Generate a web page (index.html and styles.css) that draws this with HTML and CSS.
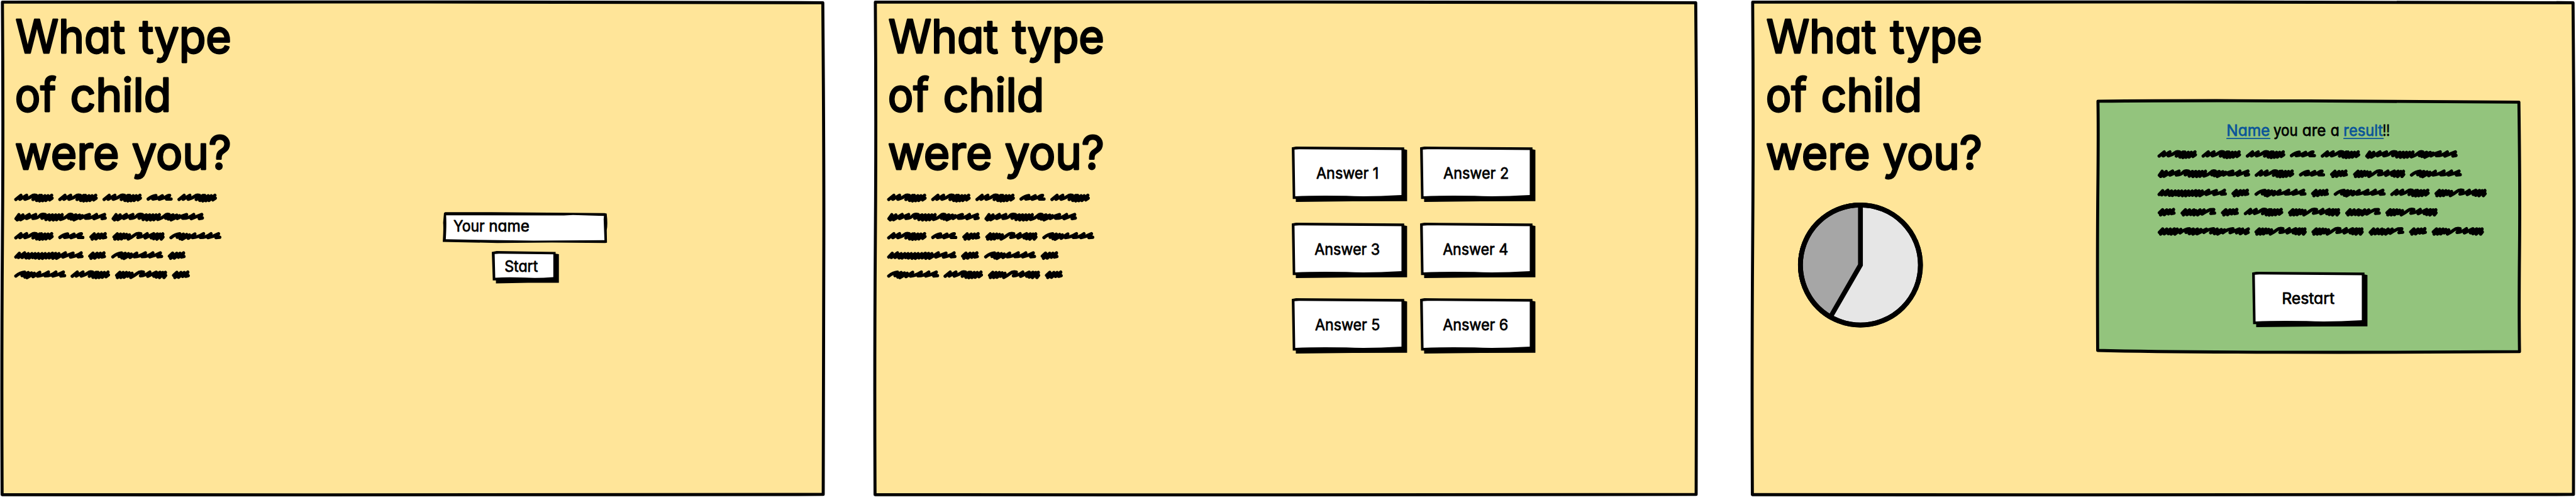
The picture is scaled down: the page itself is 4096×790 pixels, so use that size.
FILE: index.html
```html
<!DOCTYPE html>
<html lang="en">
<head>
<meta charset="utf-8">
<title>What type of child were you?</title>
<link rel="stylesheet" href="styles.css">
</head>
<body>
<svg class="defs" aria-hidden="true">
  <defs>
    <g id="frame"><path d="M4 3.5Q300 2.5 700 3.2T1357.500 4.500Q1359.500 250 1359.200 400T1358.200 815.500Q900 817.300 500 816.300T3.500 815.800Q2.500 600 4 400T4 3.500Z"/></g>
    <g id="button-box"><path d="M0 1.300 7 0 185.500 1.300V4.500L190.300 5.500V90L100 90.300 6.700 91.400V86.300H1.600Z"/><path class="paper" d="M4.500 5 12 4.300 181 5.700V80Q125 83 90 81.300 40 80.300 5.700 82Z"/></g>
    <path id="wA" d="M7 28 32 8 27 27 60 8 52 27Q75 20 85 12T107 8L92 28 125 9 110 33 134 9 124 35 151 10 139 34 166 10 155 33 184 8 176 20 186 22 174 30"/>
    <path id="wB" d="M7 26Q25 12 45 9L30 26Q60 22 77 10L62 27 90 18Q104 7 113 8L98 26 120 26"/>
    <path id="wC" d="M8 28 22 9 14 34 42 10 30 33 73 8 60 27 105 8 92 27Q115 24 125 14T152 8L136 26 172 10 156 32 188 10 174 34 204 10 192 34 220 10 208 33 236 9 228 32Q252 24 262 14T284 8L268 26 304 10 280 30 322 11 294 34 336 14 325 27Q344 15 371 8L352 26Q380 27 406 8L394 28Q428 15 446 8L434 28 449 25"/>
    <path id="wD" d="M8 24 24 9 14 34 44 10 32 33 60 10 52 29 78 8 68 28 80 25"/>
    <path id="wE" d="M8 24 24 9 12 34 40 10 28 34 56 10 44 33 70 12 62 28 84 14 78 34Q98 24 110 14T140 8L126 26Q150 24 172 8L162 28 204 8 192 28 222 9 204 32 236 10 220 34 249 9 242 34 250 24"/>
    <path id="wF" d="M7 27Q28 10 50 8L38 25 68 10 52 32 84 12 62 35 98 14 92 30 125 9 114 27Q140 25 168 8L152 26Q182 26 205 8L190 27Q220 20 242 8L230 27 248 25"/>
    <path id="wG" d="M7 28 24 10 20 30 50 8 38 30 68 12 58 32 86 12 72 33 102 12 90 30 118 12 104 33 136 12 122 34 152 12 138 34 170 12 156 32 188 10 172 32 204 11 190 34 220 12 208 34 252 8 240 28 290 9 278 28Q310 22 330 8L316 27 334 25"/>
    <path id="wH" d="M8 26 24 9 14 34 44 10 32 33 66 10 50 32 76 14 66 34 96 10 84 34 116 10 106 30Q128 16 145 9L164 8 150 27 168 25"/>
    <path id="wI" d="M8 26 24 9 14 34 44 10 32 33 62 10 52 32 82 9 66 34 96 10 84 34 114 12 110 28Q135 9 157 8L140 26 176 10 156 32 196 10 174 34 214 12 194 33 240 10 228 26Q250 10 276 8L262 28 294 10 280 32 314 12 296 34 330 14 322 28Q344 10 372 8L358 27 404 9 390 28 420 10 408 32 448 9 434 32 447 26"/>
    <g id="intro-copy">
      <use href="#wA"/><use href="#wA" x="218"/><use href="#wA" x="437"/><use href="#wB" x="655"/><use href="#wA" x="808"/>
      <use href="#wC" y="95"/><use href="#wC" x="481" y="95"/>
      <use href="#wA" y="190"/><use href="#wB" x="218" y="190"/><use href="#wD" x="371" y="190"/><use href="#wE" x="485" y="190"/><use href="#wF" x="768" y="190"/>
      <use href="#wG" y="285"/><use href="#wD" x="365" y="285"/><use href="#wF" x="480" y="285"/><use href="#wD" x="759" y="285"/>
      <use href="#wF" y="380"/><use href="#wA" x="279" y="380"/><use href="#wE" x="498" y="380"/><use href="#wD" x="780" y="380"/>
    </g>
  </defs>
</svg>

<section class="screen">
  <svg class="outline" viewBox="0 0 1362 820" preserveAspectRatio="none"><use href="#frame"/></svg>
  <div class="side">
    <h1><svg class="title" viewBox="20 20 370 284">
      <text x="26" y="87.500" textLength="181" lengthAdjust="spacingAndGlyphs">What</text><text x="230" y="87.500" textLength="152" lengthAdjust="spacingAndGlyphs">type</text>
      <text x="25" y="183.500" textLength="68" lengthAdjust="spacingAndGlyphs">of</text><text x="116" y="183.500" textLength="167" lengthAdjust="spacingAndGlyphs">child</text>
      <text x="25" y="279.500" textLength="172" lengthAdjust="spacingAndGlyphs">were</text><text x="218" y="279.500" textLength="164" lengthAdjust="spacingAndGlyphs">you?</text>
    </svg></h1>
    <svg class="intro scribble" viewBox="0 0 1026 426"><use href="#intro-copy"/></svg>
  </div>
  <form class="start-form">
    <svg class="name-field label" viewBox="0 0 272 51.500">
      <path d="M2 1.500 4 .3 80 .2 267 1.800 270.500 2.500Q272.500 20 270.600 30L271 50.500 268 51 180 50.400 90 51 0 49.300Q1.500 25 .6 18Z"/>
      <path class="paper" d="M5.500 5.500 200 5.600 215 4.800 266 6.500 265.500 12 266.800 46.500 150 47.300 60 45.800 5 45Q6.500 20 5.500 5.500Z"/>
      <text x="17.700" y="32" textLength="51.500" lengthAdjust="spacingAndGlyphs">Your</text><text x="76" y="32" textLength="67" lengthAdjust="spacingAndGlyphs">name</text>
    </svg>
    <svg class="start label" viewBox="0 0 111 54">
      <path d="M0 1.500 8 0 105.300 1.500V4.500L110.700 5.200V52.300L60 52.500 6.800 53.500V48.500H1.600Z"/>
      <path class="paper" d="M4.700 5 12 4.300 101.500 5.500V43Q75 45 55 43.800 25 42.800 5.700 44Z"/>
      <text x="21" y="34" textLength="55" lengthAdjust="spacingAndGlyphs">Start</text>
    </svg>
  </form>
</section>

<section class="screen">
  <svg class="outline" viewBox="0 0 1362 820" preserveAspectRatio="none"><use href="#frame"/></svg>
  <div class="side">
    <h1><svg class="title" viewBox="20 20 370 284">
      <text x="26" y="87.500" textLength="181" lengthAdjust="spacingAndGlyphs">What</text><text x="230" y="87.500" textLength="152" lengthAdjust="spacingAndGlyphs">type</text>
      <text x="25" y="183.500" textLength="68" lengthAdjust="spacingAndGlyphs">of</text><text x="116" y="183.500" textLength="167" lengthAdjust="spacingAndGlyphs">child</text>
      <text x="25" y="279.500" textLength="172" lengthAdjust="spacingAndGlyphs">were</text><text x="218" y="279.500" textLength="164" lengthAdjust="spacingAndGlyphs">you?</text>
    </svg></h1>
    <svg class="intro scribble" viewBox="0 0 1026 426"><use href="#intro-copy"/></svg>
  </div>
  <div class="answers">
    <svg class="button label" viewBox="0 0 190.500 91.500"><use href="#button-box"/><text x="40.500" y="53" textLength="103" lengthAdjust="spacingAndGlyphs">Answer 1</text></svg>
    <svg class="button label" viewBox="0 0 190.500 91.500"><use href="#button-box"/><text x="38.500" y="53" textLength="108" lengthAdjust="spacingAndGlyphs">Answer 2</text></svg>
    <svg class="button label" viewBox="0 0 190.500 91.500"><use href="#button-box"/><text x="37.500" y="53" textLength="108" lengthAdjust="spacingAndGlyphs">Answer 3</text></svg>
    <svg class="button label" viewBox="0 0 190.500 91.500"><use href="#button-box"/><text x="37.500" y="53" textLength="108" lengthAdjust="spacingAndGlyphs">Answer 4</text></svg>
    <svg class="button label" viewBox="0 0 190.500 91.500"><use href="#button-box"/><text x="38.500" y="53" textLength="107" lengthAdjust="spacingAndGlyphs">Answer 5</text></svg>
    <svg class="button label" viewBox="0 0 190.500 91.500"><use href="#button-box"/><text x="37.500" y="53" textLength="108" lengthAdjust="spacingAndGlyphs">Answer 6</text></svg>
  </div>
</section>

<section class="screen last">
  <svg class="outline" viewBox="0 0 1362 820" preserveAspectRatio="none"><use href="#frame"/></svg>
  <div class="side">
    <h1><svg class="title" viewBox="20 20 370 284">
      <text x="26" y="87.500" textLength="181" lengthAdjust="spacingAndGlyphs">What</text><text x="230" y="87.500" textLength="152" lengthAdjust="spacingAndGlyphs">type</text>
      <text x="25" y="183.500" textLength="68" lengthAdjust="spacingAndGlyphs">of</text><text x="116" y="183.500" textLength="167" lengthAdjust="spacingAndGlyphs">child</text>
      <text x="25" y="279.500" textLength="172" lengthAdjust="spacingAndGlyphs">were</text><text x="218" y="279.500" textLength="164" lengthAdjust="spacingAndGlyphs">you?</text>
    </svg></h1>
    <svg class="pie" viewBox="-104 -104 208 208">
      <circle class="slice-light" r="99"/>
      <path class="slice-dark" d="M0 0V-99A99 99 0 0 0 -49.500 85.700Z"/>
      <circle class="ring" r="99"/>
    </svg>
  </div>
  <div class="result">
    <svg class="panel" viewBox="0 0 701 420" preserveAspectRatio="none"><path d="M3 3Q150 1.500 350 2.500T697.500 4.500Q699.500 150 698.500 250T698.500 416Q500 417.500 300 417T2.500 414Q1.800 250 2.800 150T3 3Z"/></svg>
    <svg class="sentence label" viewBox="3670 200 275 34">
      <g class="link"><text x="3673.500" y="223.800" textLength="71.500" lengthAdjust="spacingAndGlyphs">Name</text><text x="3866.500" y="223.800" textLength="65" lengthAdjust="spacingAndGlyphs">result</text><path d="M3674 228.200H3745M3867 228.200H3932"/></g>
      <text x="3751" y="223.800" textLength="40" lengthAdjust="spacingAndGlyphs">you</text><text x="3798.500" y="223.800" textLength="39" lengthAdjust="spacingAndGlyphs">are</text><text x="3845" y="223.800" textLength="14.500" lengthAdjust="spacingAndGlyphs">a</text><text x="3931" y="223.800" textLength="12" lengthAdjust="spacingAndGlyphs">!!</text>
    </svg>
    <svg class="details scribble" viewBox="0 0 1632 426">
      <use href="#wA"/><use href="#wA" x="218"/><use href="#wA" x="437"/><use href="#wB" x="655"/><use href="#wA" x="808"/><use href="#wC" x="1027"/>
      <use href="#wC" y="95"/><use href="#wA" x="481" y="95"/><use href="#wB" x="700" y="95"/><use href="#wD" x="853" y="95"/><use href="#wE" x="967" y="95"/><use href="#wF" x="1249" y="95"/>
      <use href="#wG" y="190"/><use href="#wD" x="365" y="190"/><use href="#wF" x="480" y="190"/><use href="#wD" x="759" y="190"/><use href="#wF" x="872" y="190"/><use href="#wA" x="1152" y="190"/><use href="#wE" x="1370" y="190"/>
      <use href="#wD" y="285"/><use href="#wH" x="113" y="285"/><use href="#wD" x="313" y="285"/><use href="#wA" x="427" y="285"/><use href="#wE" x="645" y="285"/><use href="#wH" x="928" y="285"/><use href="#wE" x="1127" y="285"/>
      <use href="#wI" y="380"/><use href="#wE" x="479" y="380"/><use href="#wE" x="761" y="380"/><use href="#wH" x="1044" y="380"/><use href="#wD" x="1244" y="380"/><use href="#wE" x="1356" y="380"/>
    </svg>
    <svg class="button restart label" viewBox="0 0 190.500 91.500"><use href="#button-box"/><text x="49" y="53" textLength="87" lengthAdjust="spacingAndGlyphs">Restart</text></svg>
  </div>
</section>
</body>
</html>
```
FILE: styles.css
```css
/* 1rem is ten design pixels on a 4250-wide board */
html { font-size: calc(100vw / 425); }

body {
  margin: 0;
  display: flex;
  background: #fff;
  overflow: hidden;
  font-family: Inter, "Liberation Sans", sans-serif;
  font-weight: 400;
  font-feature-settings: "cv11"; /* single-storey a */
}

svg { display: block; overflow: visible; }
h1 { margin: 0; font-weight: 400; }
.defs { position: absolute; width: 0; height: 0; }

.screen {
  position: relative;
  flex: none;
  display: flex;
  align-items: flex-start;
  width: 136.2rem;
  height: 82rem;
  margin-right: 7.8rem;
}
.screen + .screen { margin-right: 8.6rem; }
.screen.last { margin-right: 0; }

/* hand-drawn outline lying behind a screen's content */
.outline, .panel {
  position: absolute;
  inset: 0;
  width: 100%;
  height: 100%;
  z-index: -1;
  stroke: #000;
  stroke-width: 5;
  stroke-linejoin: round;
}
.outline { fill: #ffe599; z-index: -2; }
.panel { fill: #93c47d; }

.side { width: 37rem; padding: 2rem 0 0 2rem; }

.title {
  width: 37rem;
  height: 28.4rem;
  font-size: 76px;
  stroke: #000;
  stroke-width: 3px;
  stroke-linejoin: round;
}

.scribble {
  fill: none;
  stroke: #000;
  stroke-width: 16.5;
  stroke-linecap: round;
  stroke-linejoin: round;
}
.intro { width: 34.2rem; height: 14.2rem; margin: 1.6rem 0 0 .4rem; }

.label { font-size: 25px; }
.label text { stroke: #000; stroke-width: .8px; stroke-linejoin: round; }
.paper { fill: #fff; }

.start-form { padding-top: 35rem; margin-left: 34rem; }
.name-field { width: 27.2rem; height: 5.15rem; }
.start { width: 11.1rem; height: 5.4rem; margin: 1.25rem 0 0 8.1rem; }

.answers {
  display: grid;
  grid-template-columns: 19.05rem 19.05rem;
  gap: 3.35rem 2.15rem;
  margin: 24.2rem 0 0 30.1rem;
}
.button { width: 19.05rem; height: 9.15rem; }

.pie {
  width: 20.8rem;
  height: 20.8rem;
  margin: 2.9rem 0 0 5.8rem;
  stroke: #000;
  stroke-width: 8;
}
.slice-light { fill: #e6e6e6; }
.slice-dark { fill: #a6a6a6; }
.ring { fill: none; }

.result {
  position: relative;
  box-sizing: border-box;
  width: 70.1rem;
  height: 42rem;
  margin: 16.4rem 0 0 18rem;
  padding-top: 3.6rem;
}
.sentence { width: 27.5rem; height: 3.4rem; margin-left: 21.2rem; }
.link { fill: #0b5599; }
.label .link text { stroke: #0b5599; }
.link path { stroke: #0b5599; stroke-width: 1.8; stroke-linecap: round; }
.details { width: 54.4rem; height: 14.2rem; margin: 1.4rem 0 0 10.2rem; }
.restart { margin: 5.8rem 0 0 25.75rem; }
```
